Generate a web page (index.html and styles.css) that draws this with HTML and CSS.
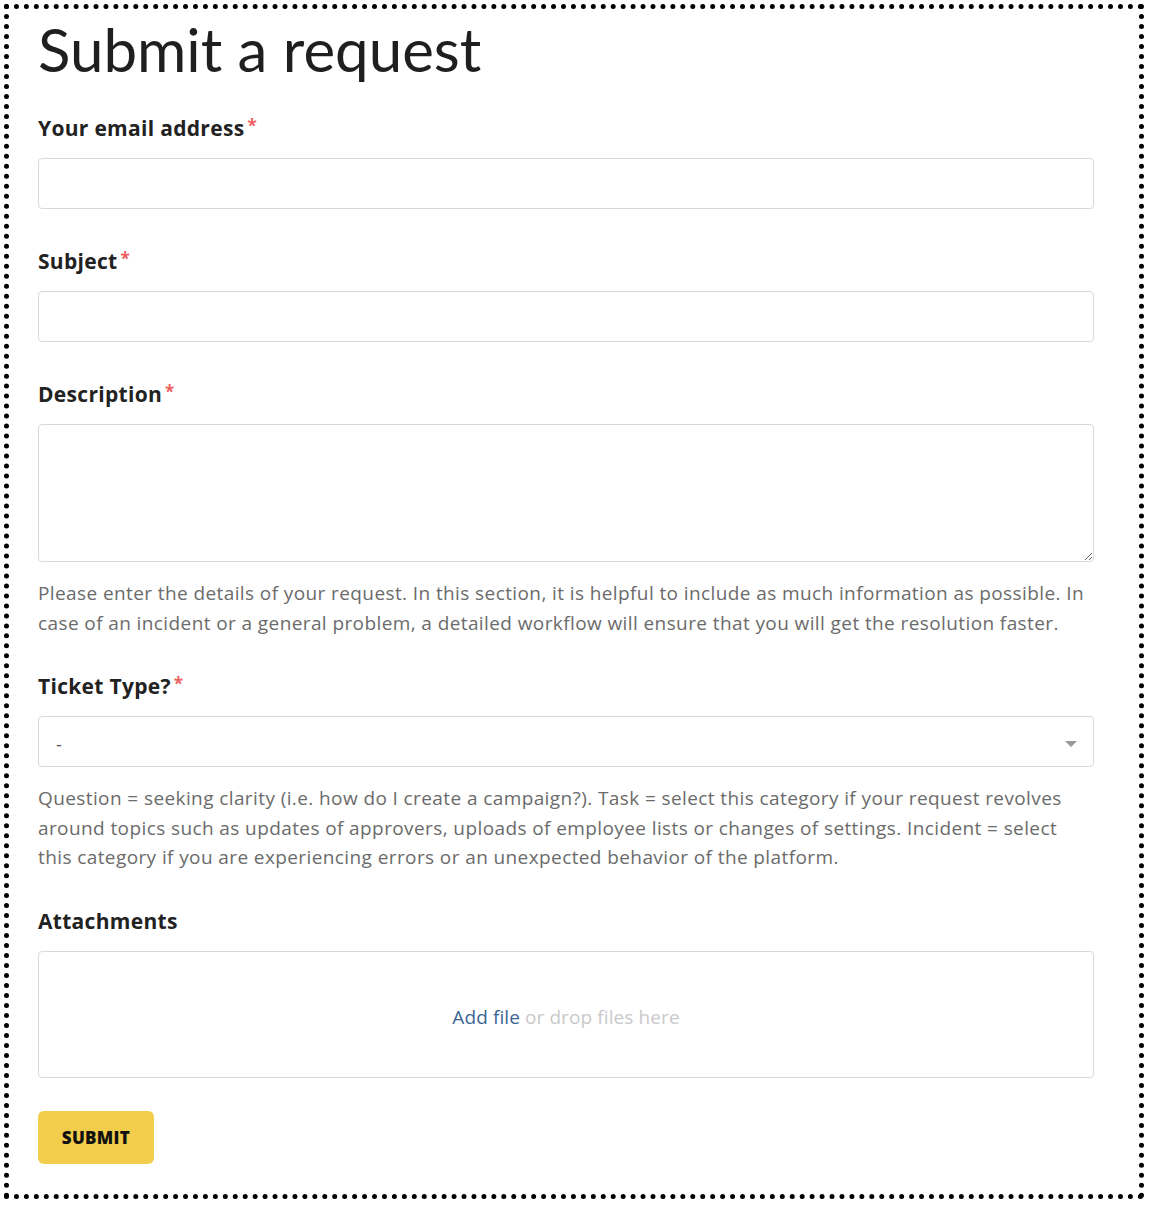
FILE: index.html
```html
<!DOCTYPE html>
<html lang="en">

<head>
    <meta charset="UTF-8">
    <meta name="viewport" content="width=device-width, initial-scale=1.0">
    <title>Submit a request</title>
    <link rel="stylesheet" href="styles.css">
</head>

<body>
    <div class="frame">
        <h1>Submit a request</h1>

        <form class="request-form" action="#" onsubmit="return false;">
            <div class="form-field">
                <label for="request_email" class="required">Your email address</label>
                <input type="email" id="request_email" class="text-input">
            </div>

            <div class="form-field">
                <label for="request_subject" class="required">Subject</label>
                <input type="text" id="request_subject" class="text-input">
            </div>

            <div class="form-field">
                <label for="request_description" class="required">Description</label>
                <textarea id="request_description" class="text-area"></textarea>
                <p class="hint">Please enter the details of your request. In this section, it is helpful to include as much information as possible. In case of an incident or a general problem, a detailed workflow will ensure that you will get the resolution faster.</p>
            </div>

            <div class="form-field">
                <label for="request_type" class="required">Ticket Type?</label>
                <div class="select-wrap">
                    <select id="request_type" class="select-input">
                        <option>-</option>
                        <option>Question</option>
                        <option>Task</option>
                        <option>Incident</option>
                    </select>
                </div>
                <p class="hint">Question = seeking clarity (i.e. how do I create a campaign?). Task = select this category if your request revolves around topics such as updates of approvers, uploads of employee lists or changes of settings. Incident = select this category if you are experiencing errors or an unexpected behavior of the platform.</p>
            </div>

            <div class="form-field">
                <label>Attachments</label>
                <div class="dropzone">
                    <a href="#" class="add-file">Add file</a>
                    <span class="drop-text">or drop files here</span>
                </div>
            </div>

            <button type="submit" class="submit-btn">Submit</button>
        </form>
    </div>
</body>

</html>
```

FILE: styles.css
```css
:root {
    --text-color: #222;
    --hint-color: #6b6b6b;
    --border-color: #d9d9d9;
    --required-color: #ef5f5f;
    --link-color: #3b6592;
    --button-color: #f2cd4c;
}

* {
    box-sizing: border-box;
}

body {
    margin: 0;
    font-family: 'Open Sans', 'Liberation Sans', Arial, sans-serif;
    color: var(--text-color);
    background: #fff;
}

.frame {
    margin: 4px 8px 10px 4px;
    border: 5px dotted #000;
    padding: 4px 45px 30px 29px;
}

h1 {
    margin: 0 0 29px;
    font-family: Lato, 'Open Sans', sans-serif;
    font-size: 60px;
    line-height: 72px;
    font-weight: 400;
    color: #1f1f1f;
}

.form-field {
    margin-bottom: 38px;
}

.form-field label {
    display: block;
    margin-bottom: 16px;
    font-size: 21px;
    line-height: 28px;
    font-weight: 700;
    letter-spacing: 0.3px;
}

.required::after {
    content: "*";
    color: var(--required-color);
    font-size: 17px;
    margin-left: 3px;
    vertical-align: top;
    position: relative;
    top: -2px;
}

.text-input,
.text-area,
.select-input {
    display: block;
    width: 100%;
    border: 1px solid var(--border-color);
    border-radius: 4px;
    font: inherit;
    font-size: 18px;
    color: var(--text-color);
    background: #fff;
}

.text-input {
    height: 51px;
    padding: 0 16px;
}

.text-area {
    height: 138px;
    padding: 10px 16px;
    resize: vertical;
}

.select-wrap {
    position: relative;
}

.select-input {
    height: 51px;
    padding: 5px 17px 0;
    appearance: none;
    -webkit-appearance: none;
    color: #555;
}

.select-wrap::after {
    content: "";
    position: absolute;
    right: 17px;
    top: 25px;
    border-left: 6px solid transparent;
    border-right: 6px solid transparent;
    border-top: 6px solid #999;
    pointer-events: none;
}

.hint {
    margin: 17px 0 -4px;
    font-size: 19px;
    line-height: 29.5px;
    letter-spacing: 0.4px;
    color: var(--hint-color);
}

.dropzone {
    height: 127px;
    padding-top: 5px;
    border: 1px solid var(--border-color);
    border-radius: 4px;
    display: flex;
    justify-content: center;
    align-items: center;
    gap: 5px;
    font-size: 19px;
    letter-spacing: 0.1px;
}

.add-file {
    color: var(--link-color);
    text-decoration: none;
}

.drop-text {
    color: #c9c9c9;
}

.form-field:last-of-type {
    margin-bottom: 33px;
}

.submit-btn {
    display: block;
    width: 116px;
    height: 53px;
    border: none;
    border-radius: 6px;
    background: var(--button-color);
    color: #111;
    font-family: inherit;
    font-size: 17px;
    font-weight: 800;
    text-transform: uppercase;
    letter-spacing: 0.3px;
    cursor: pointer;
}
```
